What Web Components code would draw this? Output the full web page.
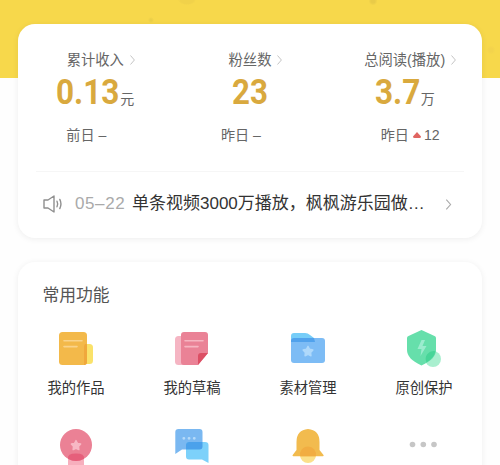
<!DOCTYPE html>
<html lang="zh-CN">
<head>
<meta charset="utf-8">
<title>创作中心</title>
<style>
html,body{margin:0;height:465px;overflow:hidden;background:#fefefe}
body{font-family:"Liberation Sans","Noto Sans CJK SC",sans-serif}
</style>
</head>
<body>
<creator-page></creator-page>
<script>
const define = (name, html, after) => {
  const t = document.createElement('template');
  t.innerHTML = html;
  customElements.define(name, class extends HTMLElement {
    constructor() {
      super();
      this.attachShadow({ mode: 'open' }).append(t.content.cloneNode(true));
    }
    connectedCallback() { if (after) after(this, this.shadowRoot); }
  });
};

define('chevron-icon', `<style>:host{display:block;flex:none;width:var(--w,5px);height:var(--h,10px);color:#c4c4c4}svg{display:block;width:100%;height:100%}</style>
<svg viewBox="0 0 5 10" fill="none" stroke="currentColor" stroke-width="1"><path d="M.5 .5 4.4 5 .5 9.5"/></svg>`);

define('big-number', `<style>:host{display:block;flex:none}svg{display:block;overflow:visible}text{font:700 35px Roboto,sans-serif;fill:#d9a93e}</style>
<svg height="26" preserveAspectRatio="none"><text x="0" y="25"></text></svg>`, (el, root) => {
  const svg = root.querySelector('svg');
  const text = root.querySelector('text');
  svg.setAttribute('width', el.getAttribute('width'));
  svg.setAttribute('viewBox', `0 0 ${el.getAttribute('natural')} 26`);
  text.textContent = el.getAttribute('value');
});

define('stat-item', `<style>
:host{display:flex;flex-direction:column;align-items:center;color:#666;font-size:14.3px;line-height:20px;white-space:nowrap}
.label{display:flex;align-items:center;gap:6px;height:20px;padding-left:11px}
.value{display:flex;align-items:flex-end;height:26px;margin-top:9px}
.unit{font-size:14px;line-height:18px;margin-bottom:-3px}
.foot{display:flex;align-items:center;height:20px;margin-top:20px;font-size:14.1px;padding-right:var(--foot-right,18px);padding-left:var(--foot-left,0)}
</style>
<div class="label"><slot name="label"></slot><chevron-icon></chevron-icon></div>
<div class="value"><slot></slot><span class="unit"><slot name="unit"></slot></span></div>
<div class="foot"><slot name="foot"></slot></div>`);

define('rise-mark', `<style>:host{display:inline-block;width:8px;height:6px;margin:0 3px 2px 4px;vertical-align:middle}svg{display:block}</style>
<svg width="8" height="6"><path d="M4 0 8 4.5Q8 6 6.5 6h-5Q0 6 0 4.5Z" fill="#e06561"/></svg>`);

define('notice-row', `<style>
:host{display:flex;align-items:center;height:64px;padding:0 30px 0 25px;font-size:17px;line-height:22px;color:#333;white-space:nowrap}
svg{flex:none}
.text{display:flex;align-items:baseline;margin-left:12px}
.date{color:#aaa;width:57px;flex:none;letter-spacing:.6px}
.title{width:296px;flex:none}
chevron-icon{--w:7px;--h:11px;color:#aaa;margin-left:auto}
</style>
<svg width="20" height="18" viewBox="0 0 20 18" fill="none" stroke="#8f8f8f" stroke-width="1.4" stroke-linejoin="round" stroke-linecap="round"><path d="M1 5h4l6-4v16l-6-4H1ZM14 6.2q1.4 2.8 0 5.6M16.8 4.4q2.3 4.6 0 9.2"/></svg>
<div class="text"><span class="date"><slot name="date"></slot></span><span class="title"><slot></slot></span></div><chevron-icon></chevron-icon>`);

define('panel-card', `<style>:host{display:block;box-sizing:border-box;background:#fff;border-radius:17px;box-shadow:0 1px 6px rgba(0,0,0,.07)}</style><slot></slot>`);

const icons = {
  works: `<rect x="19" y="14" width="16" height="20" rx="3.5" fill="#fae26a"/><rect x="1" y="2" width="28" height="33" rx="3.5" fill="#f3b94a"/><path d="M27 14h2v18q0 3-3 3V17q0-2 1-3" fill="#f0a83c"/><path d="M6 10.7h18M6 16.6h13" stroke="#fad38a" stroke-width="1.6" stroke-linecap="round"/>`,
  drafts: `<rect x="1" y="6" width="20" height="29" rx="3.5" fill="#f5b5c3"/><path d="M10 2h21q3 0 3 3v18L24 35H10q-3 0-3-3V5q0-3 3-3" fill="#ea8296"/><path d="M24 35V26q0-3 3-3h7Z" fill="#dc4f64"/><path d="M11 10.7h18M11 16.6h13" stroke="#f6b5c1" stroke-width="1.6" stroke-linecap="round"/>`,
  material: `<path d="M1 15V6q0-3 3-3h11q3 0 5 2l4 3v7Z" fill="#76cdf8"/><path d="M4 8h28q3 0 3 3v19q0 3-3 3H4q-3 0-3-3V11q0-3 3-3" fill="#7dbcf5"/><path d="M1 12V10q1-2 3-2h20l1 4Z" fill="#51a2ec"/><path d="m18 16.3 1.6 2.9 3.3.8-2.2 2.5.3 3.3-3-1.3-3 1.3.3-3.3-2.2-2.5 3.3-.8Z" fill="#afd9fb" stroke="#afd9fb" stroke-width="1.3" stroke-linejoin="round"/>`,
  shield: `<circle cx="27" cy="29" r="8" fill="#a9efcf"/><path d="M15.5 0 28.5 6q1.5.7 1.5 2v12q0 9-14.5 15.5Q1 29 1 20V8q0-1.3 1.5-2Z" fill="#66dfab"/><path d="M20.5 32.5A8 8 0 0 1 29.5 21.2Q28 28 20.5 32.5" fill="#48d598"/><path d="m15.5 10-4 9h4l-1 7 6-10h-4l2.5-6Z" fill="#9becce"/>`,
  medal: `<path d="M10 24h16v14H10Z" fill="#f7afbd"/><circle cx="18" cy="16" r="16" fill="#eb8195"/><path d="M10 29.8Q9 24.5 18 24.5t8 5.3q-8 4.5-16 0" fill="#e65f7b"/><path d="m18 11.5 1.5 2.8 3.2.7-2.1 2.4.3 3.3-2.9-1.3-2.9 1.3.3-3.3-2.1-2.4 3.2-.7Z" fill="#f7b8c4" stroke="#f7b8c4" stroke-width="1.3" stroke-linejoin="round"/>`,
  chat: `<path d="M4.5 0h21q3 0 3 3v14.5q0 3-3 3H8L1.3 25V3q0-3 3.2-3" fill="#7ab8f1"/><path d="M15 13h16q3.5 0 3.5 3v18L28 30.5H15q-3 0-3-3V16q0-3 3-3" fill="#7dd1fa"/><path d="M15 13h13.5v4.5q0 3-3 3H12V16q0-3 3-3" fill="#4ba1eb"/><path d="M9.8 9.3h.1M15 9.3h.1M20.2 9.3h.1" stroke="#b5daf9" stroke-width="2.8" stroke-linecap="round"/>`,
  bell: `<circle cx="18" cy="26" r="8" fill="#fbe08a"/><path d="M18 0Q29.5 1 29.5 13v8l4 5q.6 1.3-.8 1.3H3.5Q2 27.3 2.7 26l3.8-5v-8Q6.5 1 18 0" fill="#f2bb4e"/><path d="M10.2 27.3a8 8 0 1 1 15.6 0Z" fill="#f1ad42"/>`,
  more: `<g fill="#c6c6c6" transform="translate(-1 0)"><circle cx="7.5" cy="15.5" r="2.8"/><circle cx="18.3" cy="15.5" r="2.8"/><circle cx="29" cy="15.5" r="2.8"/></g>`
};
define('feature-item', `<style>:host{display:flex;flex-direction:column;align-items:center;font-size:14.3px;line-height:22px;color:#333;white-space:nowrap}svg{display:block;overflow:visible;margin-bottom:11px}</style>
<svg width="36" height="36" viewBox="0 0 36 36"></svg><slot></slot>`, (el, root) => {
  root.querySelector('svg').innerHTML = icons[el.getAttribute('icon')];
});

define('creator-page', `<style>
:host{display:flex;flex-direction:column;height:465px;box-sizing:border-box;padding:23.5px 18px 0;gap:23.5px;overflow:hidden;
background:radial-gradient(ellipse 9px 5px at 187px 0,#f1d24a 75%,transparent),radial-gradient(circle at 151px 20px,#ebcf49 1px,transparent 3px),radial-gradient(circle at 373px 1px,#e9cb48 2px,transparent 4.5px),radial-gradient(circle at 491px 50px,#f3d34c 2px,transparent 4.5px),linear-gradient(#f7d84b 78px,#fefefe 78px)}
.summary{height:214.5px;flex:none}
.features{height:260px;flex:none}
.stats{display:grid;grid-template-columns:repeat(3,1fr);height:147.5px;padding-top:26px;box-sizing:border-box}
.rule{height:1px;background:#f6f6f6;margin:0 18px}
h2{font-weight:400;font-size:16.8px;line-height:24px;color:#555;margin:0;padding:22.5px 0 0 24.5px}
.grid{display:grid;grid-template-columns:repeat(4,1fr);row-gap:30px;padding-top:22px}
.last{--foot-right:0;--foot-left:11px}
</style>
<panel-card class="summary">
 <div class="stats">
  <stat-item><span slot="label">累计收入</span><big-number value="0.13" width="64" natural="71"></big-number><span slot="unit">元</span><span slot="foot">前日 –</span></stat-item>
  <stat-item><span slot="label">粉丝数</span><big-number value="23" width="36" natural="40.2"></big-number><span slot="foot">昨日 –</span></stat-item>
  <stat-item class="last"><span slot="label">总阅读(播放)</span><big-number value="3.7" width="46" natural="51"></big-number><span slot="unit">万</span><span slot="foot">昨日<rise-mark></rise-mark>12</span></stat-item>
 </div>
 <div class="rule"></div>
 <notice-row><span slot="date">05–22</span>单条视频3000万播放，枫枫游乐园做…</notice-row>
</panel-card>
<panel-card class="features">
 <h2>常用功能</h2>
 <div class="grid">
  <feature-item icon="works">我的作品</feature-item>
  <feature-item icon="drafts">我的草稿</feature-item>
  <feature-item icon="material">素材管理</feature-item>
  <feature-item icon="shield">原创保护</feature-item>
  <feature-item icon="medal"></feature-item>
  <feature-item icon="chat"></feature-item>
  <feature-item icon="bell"></feature-item>
  <feature-item icon="more"></feature-item>
 </div>
</panel-card>`);
</script>
</body>
</html>
